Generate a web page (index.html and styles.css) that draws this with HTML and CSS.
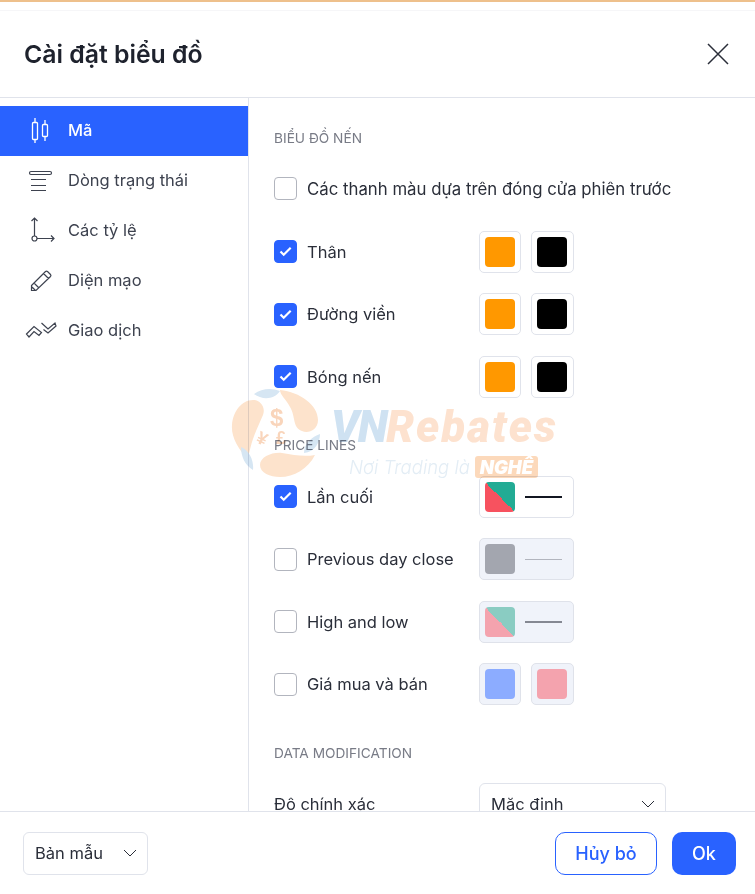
FILE: index.html
```html
<!DOCTYPE html>
<html lang="vi">
<head>
  <meta charset="UTF-8">
  <title>Cài đặt biểu đồ</title>
  <link rel="stylesheet" href="styles.css">
</head>
<body>
  <div class="topline"></div>
  <div class="dialog">
    <header class="head">
      <h1>Cài đặt biểu đồ</h1>
      <svg class="close" width="22" height="22" viewBox="0 0 22 22"><path d="M1 1l20 20M21 1L1 21" stroke="#2a2e39" stroke-width="1.5" fill="none"/></svg>
    </header>
    <div class="body">
      <nav class="tabs">
        <a class="tab active">
          <svg width="32" height="28" viewBox="0 0 32 28" fill="none" stroke="currentColor" stroke-width="1.3"><path d="M10 1v4.500M10 22.500V26M20 3v4.500M20 19.500V24"/><rect x="7.500" y="5.500" width="5" height="17" rx="1"/><rect x="17.500" y="7.500" width="5" height="12" rx="1"/></svg>
          <span>Mã</span>
        </a>
        <a class="tab">
          <svg width="32" height="28" viewBox="0 0 32 28" fill="none" stroke="currentColor" stroke-width="1.2"><rect x="4.500" y="4.500" width="22" height="3" rx="1.500"/><path d="M6 12.500h15M6 18.500h15M6 23.500h15"/></svg>
          <span>Dòng trạng thái</span>
        </a>
        <a class="tab">
          <svg width="32" height="28" viewBox="0 0 32 28" fill="none" stroke="currentColor" stroke-width="1.2"><path d="M9.500 19V1M6.500 4l3-3 3 3M12 21.500h17M26 18.500l3 3-3 3"/><circle cx="9.500" cy="21.500" r="2.500"/></svg>
          <span>Các tỷ lệ</span>
        </a>
        <a class="tab">
          <svg width="32" height="28" viewBox="0 0 32 28" fill="none" stroke="currentColor" stroke-width="1.2"><path d="M6.500 18.500L20.500 4.500a1.500 1.500 0 0 1 2 0l3 3a1.500 1.500 0 0 1 0 2L11 23.500H6.500zM18.500 6.500l5 5M9 16l5 5M7 20l3.500 3.500"/></svg>
          <span>Diện mạo</span>
        </a>
        <a class="tab">
          <svg width="32" height="28" viewBox="0 0 32 28" fill="none" stroke="currentColor" stroke-width="1.2"><path d="M1.500 17L9 9.500l7.500 6-2.500 3-5-4-5 5.500zM16.500 6l6.500 6 7-6 1 3-8 7-4.500-3.500"/></svg>
          <span>Giao dịch</span>
        </a>
      </nav>
      <main class="panel">
        <div class="section-title">BIỂU ĐỒ NẾN</div>
        <div class="row row-plain">
          <span class="check"></span>
          <span class="label">Các thanh màu dựa trên đóng cửa phiên trước</span>
        </div>
        <div class="group">
          <div class="row">
            <span class="check on"><svg width="13" height="11" viewBox="0 0 13 11"><path d="M1.500 5.500l3.200 3.200 7-7" stroke="#fff" stroke-width="2.200" fill="none"/></svg></span>
            <span class="label">Thân</span>
            <div class="swatches">
              <span class="swatch"><i class="color orange"></i></span>
              <span class="swatch"><i class="color black"></i></span>
            </div>
          </div>
          <div class="row">
            <span class="check on"><svg width="13" height="11" viewBox="0 0 13 11"><path d="M1.500 5.500l3.200 3.200 7-7" stroke="#fff" stroke-width="2.200" fill="none"/></svg></span>
            <span class="label">Đường viền</span>
            <div class="swatches">
              <span class="swatch"><i class="color orange"></i></span>
              <span class="swatch"><i class="color black"></i></span>
            </div>
          </div>
          <div class="row">
            <span class="check on"><svg width="13" height="11" viewBox="0 0 13 11"><path d="M1.500 5.500l3.200 3.200 7-7" stroke="#fff" stroke-width="2.200" fill="none"/></svg></span>
            <span class="label">Bóng nến</span>
            <div class="swatches">
              <span class="swatch"><i class="color orange"></i></span>
              <span class="swatch"><i class="color black"></i></span>
            </div>
          </div>
        </div>
        <div class="section-title second">PRICE LINES</div>
        <div class="group">
          <div class="row">
            <span class="check on"><svg width="13" height="11" viewBox="0 0 13 11"><path d="M1.500 5.500l3.200 3.200 7-7" stroke="#fff" stroke-width="2.200" fill="none"/></svg></span>
            <span class="label">Lần cuối</span>
            <span class="swatch wide"><i class="color split"></i><b class="line line-dark"></b></span>
          </div>
          <div class="row">
            <span class="check"></span>
            <span class="label">Previous day close</span>
            <span class="swatch wide off"><i class="color grey"></i><b class="line line-thin"></b></span>
          </div>
          <div class="row">
            <span class="check"></span>
            <span class="label">High and low</span>
            <span class="swatch wide off"><i class="color split-off"></i><b class="line line-mid"></b></span>
          </div>
          <div class="row">
            <span class="check"></span>
            <span class="label">Giá mua và bán</span>
            <div class="swatches">
              <span class="swatch off"><i class="color blue-off"></i></span>
              <span class="swatch off"><i class="color red-off"></i></span>
            </div>
          </div>
        </div>
        <div class="section-title third">DATA MODIFICATION</div>
        <div class="row row-select">
          <span class="label">Độ chính xác</span>
          <div class="select select-wide">
            <span>Mặc định</span>
            <svg width="14" height="8" viewBox="0 0 14 8"><path d="M1 1l6 6 6-6" stroke="#2a2e39" fill="none"/></svg>
          </div>
        </div>
      </main>
    </div>
    <footer class="foot">
      <div class="select">
        <span>Bản mẫu</span>
        <svg width="14" height="8" viewBox="0 0 14 8"><path d="M1 1l6 6 6-6" stroke="#2a2e39" fill="none"/></svg>
      </div>
      <div class="actions">
        <button class="btn ghost">Hủy bỏ</button>
        <button class="btn primary">Ok</button>
      </div>
    </footer>
  </div>

  <!-- watermark lies over the dialog -->
  <div class="watermark">
    <svg class="wm-logo" width="90" height="92" viewBox="0 0 90 92">
      <path d="M23 13C30 13 36 20 33 28 28 40 22 50 18 72 8 62 1 50 2 38 3 24 12 13 23 13z" fill="#fde3cc"/>
      <path d="M50 3C70 5 88 18 88 33 88 43 78 47 72 44 62 40 66 30 60 20 56 12 50 8 50 3z" fill="#fde3cc"/>
      <path d="M30 78C30 70 42 65 52 66 64 68 74 70 85 68 78 82 64 90 50 90 40 90 30 86 30 78z" fill="#fde3cc"/>
      <path d="M24 7C32 1 42 1 50 4 44 13 32 13 24 7zM11 60C20 64 24 74 23 83 15 78 11 70 11 60zM90 47C90 55 85 65 74 66 74 56 82 50 90 47z" fill="#d6e6f3"/>
      <text x="40" y="39" class="wm-sign">$</text>
      <text x="27" y="58" class="wm-sign small" transform="rotate(25 33 52)">¥</text>
      <text x="46" y="57" class="wm-sign small">£</text>
    </svg>
    <div class="wm-name"><span class="wm-vn">VN</span><span class="wm-rebates">Rebates</span></div>
    <div class="wm-slogan"><span>Nơi Trading là</span><b>NGHỀ</b></div>
  </div>
</body>
</html>
```

FILE: styles.css
```css
* { box-sizing: border-box; }
html, body { height: 100%; }
body {
  margin: 0;
  height: 100vh;
  overflow: hidden;
  display: flex;
  flex-direction: column;
  background: #fff;
  color: #131722;
  font-family: Inter, "Noto Sans", sans-serif;
  font-size: 16.5px;
  position: relative;
}
.topline {
  height: 11px;
  flex: none;
  border-top: 2px solid #eec08c;
  background: #fff;
  border-bottom: 1px solid #f6f6f8;
}
.dialog {
  flex: 1;
  min-height: 0;
  display: flex;
  flex-direction: column;
}
.head {
  height: 87px;
  flex: none;
  display: flex;
  align-items: center;
  justify-content: space-between;
  padding: 0 26px 0 24px;
  border-bottom: 1px solid #e0e3eb;
}
.head h1 {
  margin: 0;
  font-size: 24.8px;
  font-weight: 600;
  color: #1e222d;
}
.body {
  flex: 1;
  min-height: 0;
  display: flex;
}
.tabs {
  width: 249px;
  flex: none;
  padding-top: 8px;
  border-right: 1px solid #e0e3eb;
}
.tab {
  height: 50px;
  display: flex;
  align-items: center;
  gap: 11px;
  padding-left: 25px;
  color: #3d424f;
}
.tab svg { flex: none; }
.tab span { padding-bottom: 2px; }
.tab.active {
  background: #2962ff;
  color: #fff;
  font-weight: 500;
}
.panel {
  flex: 1;
  overflow: hidden;
  padding: 31px 0 0 25px;
}
.section-title {
  font-size: 13.7px;
  line-height: 18px;
  color: #787b86;
}
.section-title.second { margin-top: 38px; }
.section-title.third { margin-top: 38.6px; }
.row {
  display: flex;
  align-items: center;
  min-height: 42px;
}
.row-plain { margin: 30px 0 30.9px; min-height: 23px; }
.row-plain .label { font-size: 16.8px; }
.group {
  display: flex;
  flex-direction: column;
  gap: 20.5px;
}
.second + .group { margin-top: 22px; }
.check {
  width: 23px;
  height: 23px;
  flex: none;
  display: flex;
  align-items: center;
  justify-content: center;
  border: 1px solid #b2b5be;
  border-radius: 4px;
  margin-right: 10px;
}
.check.on {
  background: #2962ff;
  border-color: #2962ff;
}
.label {
  width: 172px;
  flex: none;
  white-space: nowrap;
  color: #2a2e39;
}
.row-select .label { width: 205px; }
.row-select { margin-top: 21px; }
.swatches {
  display: flex;
  gap: 10px;
}
.swatch {
  width: 42px;
  height: 42px;
  display: flex;
  align-items: center;
  padding: 0 5px;
  border: 1px solid #e0e3eb;
  border-radius: 5px;
  background: #fff;
}
.swatch + .swatch { width: 43px; }
.swatch.wide {
  width: 95px;
  gap: 10px;
}
.swatch.off {
  background: #f0f3fa;
  border-color: #dfe2ea;
}
.color {
  width: 30px;
  height: 30px;
  flex: none;
  border-radius: 4px;
}
.orange { background: #ff9800; }
.black { background: #000; }
.grey { background: #a3a6af; }
.blue-off { background: #8cacff; }
.red-off { background: #f4a3ae; }
.split { background: linear-gradient(45deg, #f7525f 50%, #22ab94 50%); }
.split-off { background: linear-gradient(45deg, #f4a3ae 50%, #8accc2 50%); }
.line {
  display: block;
  width: 37px;
}
.line-dark { border-top: 2px solid #131722; }
.line-thin { border-top: 1px solid #b2b5be; }
.line-mid { border-top: 2px solid #858892; }
.select {
  height: 43px;
  width: 125px;
  display: flex;
  align-items: center;
  justify-content: space-between;
  padding: 0 10px 0 11px;
  border: 1px solid #e0e3eb;
  border-radius: 6px;
  background: #fff;
  color: #2a2e39;
}
.select-wide { width: 187px; height: 43px; }
.foot {
  height: 83px;
  flex: none;
  display: flex;
  align-items: center;
  justify-content: space-between;
  padding: 0 19px 0 23px;
  border-top: 1px solid #e0e3eb;
  background: #fff;
}
.actions {
  display: flex;
  gap: 15px;
}
.btn {
  height: 43px;
  border-radius: 10px;
  font: 500 18px Inter, "Noto Sans", sans-serif;
}
.ghost {
  width: 102px;
  background: #fff;
  color: #2962ff;
  border: 1px solid #2962ff;
}
.primary {
  width: 64px;
  background: #2962ff;
  color: #fff;
  border: 0;
}
.watermark {
  position: absolute;
  left: 230px;
  top: 387px;
  width: 330px;
  height: 95px;
  pointer-events: none;
  mix-blend-mode: multiply;
}
.wm-logo {
  position: absolute;
  left: 0;
  top: 0;
}
.wm-sign {
  font: 700 24px "Liberation Sans", sans-serif;
  fill: #f9d5bb;
}
.wm-sign.small { font-size: 18px; }
.wm-name {
  position: absolute;
  left: 101px;
  top: 15px;
  font: italic 900 44px/50px Roboto, sans-serif;
  white-space: nowrap;
}
.wm-vn { color: #cfe2f2; letter-spacing: -1.5px; }
.wm-rebates { color: #fde2cf; letter-spacing: 2px; }
.wm-slogan {
  position: absolute;
  left: 119px;
  top: 69px;
  display: flex;
  align-items: center;
  gap: 5px;
  font: italic 300 18.5px/22px Inter, sans-serif;
  color: #e3edf5;
  white-space: nowrap;
}
.wm-slogan b {
  width: 63px;
  text-align: center;
  background: #fcd9bb;
  border-radius: 3px;
  color: #fff;
  font-weight: 900;
}
```
